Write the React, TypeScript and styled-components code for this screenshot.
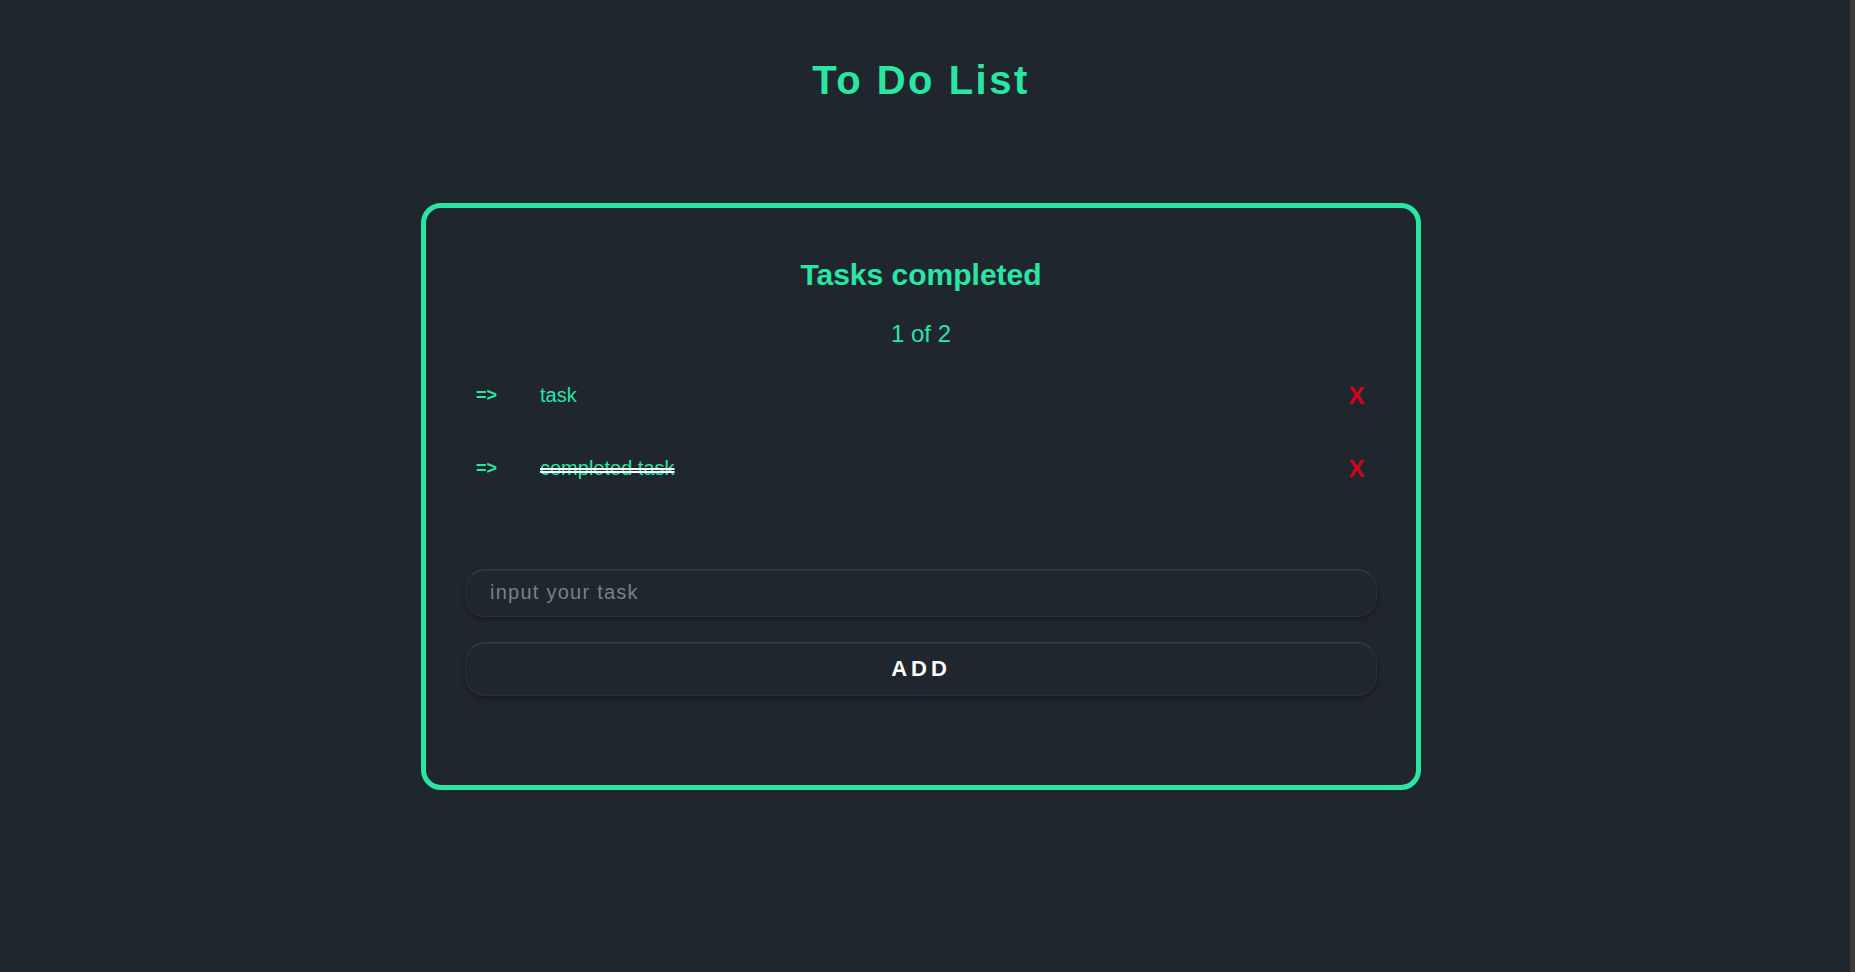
import React, { useState } from "react";
import styled, { createGlobalStyle } from "styled-components";

const GREEN = "#29e6a4";
const BG = "#20262e";

const GlobalStyle = createGlobalStyle`
  html {
    background: ${BG};
  }
  body {
    margin: 0;
    background: ${BG};
    font-family: "Liberation Sans", Arial, sans-serif;
  }
  * { box-sizing: border-box; }
`;

const Page = styled.main`
  min-height: 972px;
  display: flex;
  flex-direction: column;
  align-items: center;
  padding: 57px 13px 0 0;
`;

/* strip of the browser's scroll track visible at the right edge */
const ScrollTrack = styled.div`
  position: fixed;
  top: 0;
  right: 0;
  width: 5px;
  height: 100vh;
  background: #3a3b3d;
`;

const Title = styled.h1`
  margin: 0;
  color: ${GREEN};
  font-size: 40px;
  font-weight: 700;
  letter-spacing: 2.5px;
  line-height: 46px;
`;

const Card = styled.section`
  margin-top: 100px;
  width: 1000px;
  border: 5px solid ${GREEN};
  border-radius: 20px;
  padding: 50px 39px 89px;
  display: flex;
  flex-direction: column;
`;

const Heading = styled.h2`
  margin: 0;
  text-align: center;
  color: ${GREEN};
  font-size: 30px;
  font-weight: 700;
  line-height: 34.5px;
`;

const Count = styled.p`
  margin: 27px 0 0;
  text-align: center;
  color: ${GREEN};
  font-size: 24px;
  line-height: 27.6px;
`;

const List = styled.ul`
  list-style: none;
  margin: 34.5px 0 0;
  padding: 0;
  display: flex;
  flex-direction: column;
  gap: 46px;
`;

const Row = styled.li`
  display: flex;
  align-items: center;
  padding: 0 12.5px 0 11px;
`;

const Arrow = styled.span`
  width: 64px;
  color: ${GREEN};
  font-size: 18px;
  font-weight: 700;
  flex: none;
`;

const TaskText = styled.span<{ $done: boolean }>`
  flex: 1;
  color: ${GREEN};
  font-size: 20px;
  line-height: 23px;
  cursor: pointer;
  text-decoration: ${(p) => (p.$done ? "line-through double #ffffff" : "none")};
`;

const Remove = styled.button`
  background: none;
  border: none;
  padding: 0;
  color: #d2021c;
  font-family: "Liberation Sans", Arial, sans-serif;
  font-size: 24px;
  font-weight: 700;
  line-height: 27.6px;
  cursor: pointer;
`;

const Form = styled.form`
  margin-top: 86px;
  display: flex;
  flex-direction: column;
  gap: 25px;
`;

const fieldStyle = `
  width: 100%;
  background: ${BG};
  border: 1px solid #2a3038;
  border-top-color: #3a4048;
  border-radius: 20px;
  box-shadow: inset 0 1px 1px rgba(255, 255, 255, 0.05), 0 3px 5px rgba(0, 0, 0, 0.3);
  font-family: "Liberation Sans", Arial, sans-serif;
  outline: none;
`;

const Input = styled.input`
  ${fieldStyle}
  height: 48px;
  padding: 0 24px;
  color: #e6e6e6;
  font-size: 20px;
  letter-spacing: 1.25px;
  &::placeholder {
    color: #7b8087;
  }
`;

const AddButton = styled.button`
  ${fieldStyle}
  height: 54px;
  color: #ffffff;
  font-size: 22px;
  font-weight: 700;
  letter-spacing: 4px;
  cursor: pointer;
`;

type Task = { id: number; text: string; done: boolean };

export default function App() {
  const [tasks, setTasks] = useState<Task[]>([
    { id: 1, text: "task", done: false },
    { id: 2, text: "completed task", done: true },
  ]);
  const [value, setValue] = useState("");

  const done = tasks.filter((t) => t.done).length;

  return (
    <>
      <GlobalStyle />
      <Page>
        <Title>To Do List</Title>
        <Card>
          <Heading>Tasks completed</Heading>
          <Count>
            {done} of {tasks.length}
          </Count>
          <List>
            {tasks.map((t) => (
              <Row key={t.id}>
                <Arrow>=&gt;</Arrow>
                <TaskText
                  $done={t.done}
                  onClick={() =>
                    setTasks((ts) => ts.map((x) => (x.id === t.id ? { ...x, done: !x.done } : x)))
                  }
                >
                  {t.text}
                </TaskText>
                <Remove onClick={() => setTasks((ts) => ts.filter((x) => x.id !== t.id))}>X</Remove>
              </Row>
            ))}
          </List>
          <Form
            onSubmit={(e) => {
              e.preventDefault();
              if (!value.trim()) return;
              setTasks((ts) => [...ts, { id: Date.now(), text: value.trim(), done: false }]);
              setValue("");
            }}
          >
            <Input
              placeholder="input your task"
              value={value}
              onChange={(e) => setValue(e.target.value)}
            />
            <AddButton type="submit">ADD</AddButton>
          </Form>
        </Card>
      </Page>
      <ScrollTrack />
    </>
  );
}
